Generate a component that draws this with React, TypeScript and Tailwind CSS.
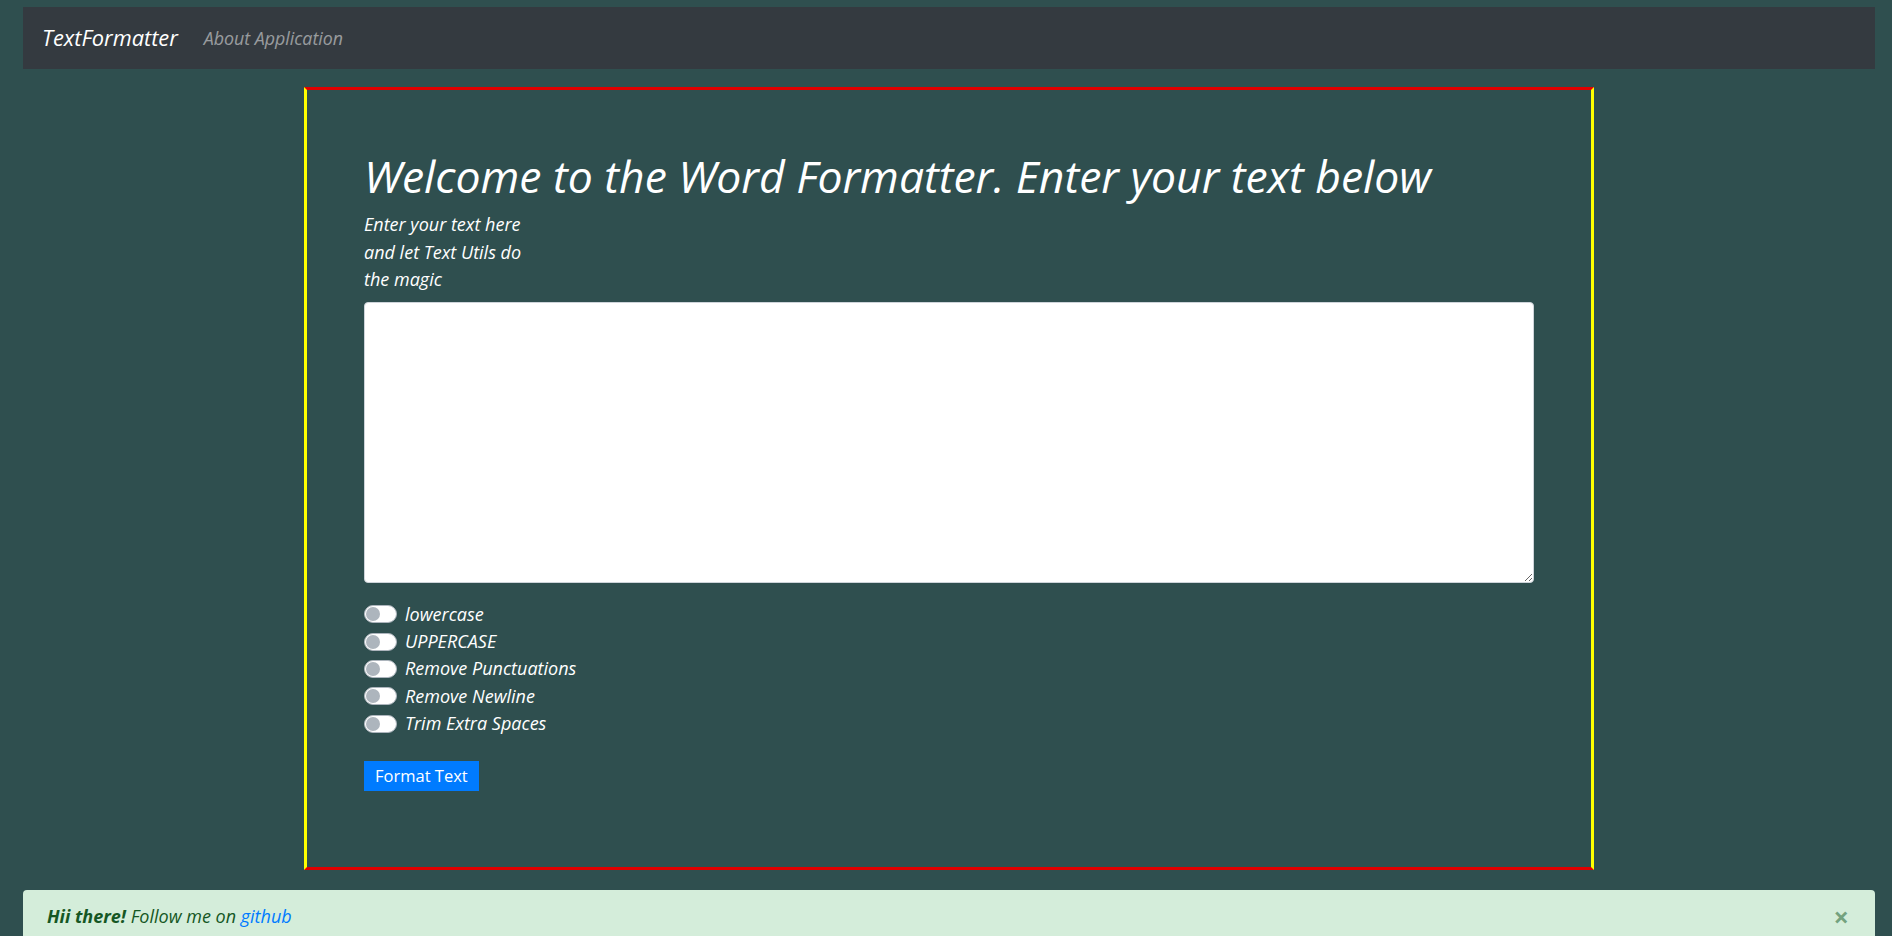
import React from 'react';

const OPTIONS = ['lowercase', 'UPPERCASE', 'Remove Punctuations', 'Remove Newline', 'Trim Extra Spaces'];

const Switch = ({ label }: { label: string }) => (
  <label className="flex h-[27.4px] items-center gap-[8px]">
    <span className="relative h-[18px] w-[33px] shrink-0 rounded-full border border-[#adb5bd] bg-white">
      <span className="absolute top-[1px] left-[1px] h-[14px] w-[14px] rounded-full bg-[#adb5bd]" />
    </span>
    <span className="text-[18px] leading-[27px] text-white">{label}</span>
  </label>
);

const App = () => {
  return (
    <div className="min-h-[936px] bg-[#2f4f4f] pt-[7px] pr-[17px] pl-[23px] italic [font-family:'Segoe_UI','Open_Sans',sans-serif]">
      <nav className="flex h-[62px] items-center gap-[26px] bg-[#343a40] px-[19px]">
        <span className="text-[21.8px] text-white">TextFormatter</span>
        <span className="text-[17.8px] text-white/50">About Application</span>
      </nav>

      <div className="mx-[281px] mt-[18px] border-x-[3px] border-y-[3px] border-x-[#ffff00] border-y-[#e00000] px-[57px] pt-[59px] pb-[76px]">
        <h1 className="mb-[8px] text-[44.5px] leading-[54px] font-normal text-white">
          Welcome to the Word Formatter. Enter your text below
        </h1>
        <label className="mb-[8px] block w-[160px] text-[18px] leading-[27.5px] text-white">
          Enter your text here and let Text Utils do the magic
        </label>
        <textarea className="mb-[18px] block h-[281px] w-full resize-y rounded-[4px] border border-[#ced4da] bg-white" />
        <div className="flex flex-col">
          {OPTIONS.map((o) => (
            <Switch key={o} label={o} />
          ))}
        </div>
        <button className="mt-[24px] h-[30px] bg-[#007bff] px-[11px] text-[16.5px] leading-[30px] not-italic text-white">
          Format Text
        </button>
      </div>

      <div className="mt-[20px] flex h-[50px] items-start justify-between rounded-t-[4px] bg-[#d4edda] pt-[13px] pr-[26px] pl-[24px] text-[18px] text-[#155724]">
        <span className="leading-[27px]">
          <strong className="font-bold">Hii there!</strong> Follow me on{' '}
          <a className="text-[#007bff]">github</a>
        </span>
        <span className="text-[27px] leading-[27px] font-bold not-italic text-[#155724]/50">×</span>
      </div>
    </div>
  );
};

export default App;
